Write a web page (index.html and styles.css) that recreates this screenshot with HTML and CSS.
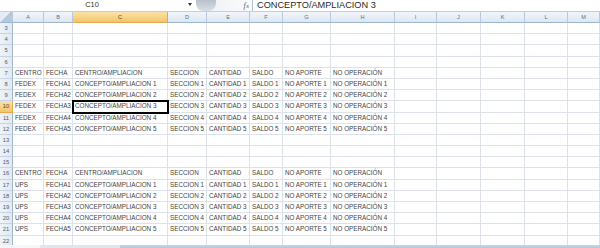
FILE: index.html
```html
<!DOCTYPE html>
<html lang="es">
<head>
    <meta charset="UTF-8">
    <title>Libro1 - Hoja1</title>
    <link rel="stylesheet" href="styles.css">
</head>
<body>
    <div class="window">
        <div class="formula-bar">
            <div class="name-box">C10</div>
            <div class="name-arrow"></div>
            <div class="fx-buttons">
                <span class="fx-knob"></span>
                <span class="fx">f<span class="fx-x">x</span></span>
            </div>
            <div class="formula-text">CONCEPTO/AMPLIACION 3</div>
        </div>

        <div class="sheet" id="sheet"></div>

        <div class="sheet-footer">
            <div class="tabs"></div>
            <div class="tab-gap"></div>
            <div class="hscroll"></div>
        </div>
    </div>

    <script>
        // columnas visibles de la hoja
        const columns = ['A', 'B', 'C', 'D', 'E', 'F', 'G', 'H', 'I', 'J', 'K', 'L', 'M'];
        const activeRow = 10;
        const activeCol = 2;

        const titles = ['CENTRO', 'FECHA', 'CENTRO/AMPLIACION', 'SECCION', 'CANTIDAD', 'SALDO', 'NO APORTE', 'NO OPERACIÓN'];

        function dataRow(centro, n) {
            return [centro, 'FECHA' + n, 'CONCEPTO/AMPLIACION ' + n, 'SECCION ' + n,
                'CANTIDAD ' + n, 'SALDO ' + n, 'NO APORTE ' + n, 'NO OPERACIÓN ' + n];
        }

        const data = { 7: titles, 16: titles };
        for (let n = 1; n <= 5; n++) {
            data[7 + n] = dataRow('FEDEX', n);
            data[16 + n] = dataRow('UPS', n);
        }

        const sheet = document.getElementById('sheet');

        function addCell(text, className) {
            const cell = document.createElement('div');
            cell.className = className;
            cell.textContent = text;
            sheet.appendChild(cell);
            return cell;
        }

        // cabecera de columnas
        addCell('', 'corner');
        columns.forEach((col, i) => {
            addCell(col, i === activeCol ? 'col-head selected' : 'col-head');
        });

        // filas 3 a 22
        for (let r = 3; r <= 22; r++) {
            addCell(r, r === activeRow ? 'row-head selected' : 'row-head');
            const values = data[r] || [];
            columns.forEach((col, i) => {
                const cls = (r === activeRow && i === activeCol) ? 'cell active' : 'cell';
                addCell(values[i] || '', cls);
            });
        }
    </script>
</body>
</html>
```

FILE: styles.css
```css
* {
    box-sizing: border-box;
}

body {
    margin: 0;
    background: #fff;
    font-family: 'Liberation Sans', Arial, sans-serif;
    color: #2b2b2b;
}

.window {
    width: 600px;
    height: 248px;
    display: flex;
    flex-direction: column;
    overflow: hidden;
}

/* barra de fórmulas */
.formula-bar {
    height: 12px;
    flex: none;
    display: flex;
    align-items: stretch;
    background: #fff;
    border-bottom: 1px solid #c3cfdd;
}

.name-box {
    width: 184px;
    text-align: center;
    font-size: 7.4px;
    line-height: 10px;
    color: #333;
}

.name-arrow {
    width: 12px;
    display: flex;
    align-items: center;
    justify-content: center;
}

.name-arrow::before {
    content: '';
    border-left: 2.5px solid transparent;
    border-right: 2.5px solid transparent;
    border-top: 3px solid #333;
    margin-bottom: 2px;
}

.fx-buttons {
    width: 57px;
    height: 11px;
    display: flex;
    align-items: center;
    justify-content: space-between;
    padding-right: 3px;
    border-radius: 0 0 0 6px;
    background: linear-gradient(to right, #eef1f5, #f4f6f8 60%, #fbfbfc);
    border-right: 1px solid #b7c3d1;
}

.fx-knob {
    width: 20px;
    height: 11px;
    border-radius: 0 0 8px 8px;
    background: linear-gradient(to bottom, #b8c1cc, #d9dee5);
}

.fx {
    font-family: 'Liberation Serif', serif;
    font-style: italic;
    font-size: 8px;
    line-height: 10px;
    color: #555;
}

.fx-x {
    font-size: 6px;
    margin-left: 0.5px;
}

.formula-text {
    flex: 1;
    padding-left: 4px;
    font-size: 9.2px;
    line-height: 10px;
    color: #2a2a2a;
}

/* hoja */
.sheet {
    flex: 1;
    min-height: 0;
    overflow: hidden;
    display: grid;
    grid-template-columns: 13px 31px 29px 95px 39px 43px 33px 48px 64px 42px 44px 44px 43px 32px;
    grid-template-rows: 11px;
    grid-auto-rows: 11.2px;
}

.corner,
.col-head,
.row-head {
    background: linear-gradient(to bottom, #f1f5fa, #dde6f1);
    border-right: 1px solid #b9c9db;
    border-bottom: 1px solid #9eb6ce;
    color: #5b6f88;
    font-size: 5.6px;
    line-height: 10px;
    text-align: center;
}

.corner {
    background: linear-gradient(135deg, #e4ebf4 50%, #b7c8dc 50%);
}

.row-head {
    background: linear-gradient(to right, #eef3f9, #e2e9f3);
    border-bottom: 1px solid #c6d4e4;
    border-right: 1px solid #9eb6ce;
    font-size: 5.8px;
    color: #4d5d72;
}

.col-head.selected,
.row-head.selected {
    background: linear-gradient(to bottom, #fbe2a9, #f3c56b);
    border-right-color: #e6a94c;
    border-bottom-color: #e6a94c;
    color: #4c4232;
}

.cell {
    border-right: 1px solid #dde2ea;
    border-bottom: 1px solid #dde2ea;
    padding-left: 2px;
    font-size: 6.3px;
    line-height: 10.4px;
    white-space: nowrap;
    color: #444;
}

.cell.active {
    outline: 2px solid #000;
    outline-offset: -1px;
    position: relative;
    z-index: 1;
}

/* pestañas y barra de desplazamiento */
.sheet-footer {
    height: 3px;
    flex: none;
    display: flex;
}

.tabs {
    width: 40px;
    background: #f4f6f9;
}

.tab-gap {
    width: 80px;
    background: #e1e6ed;
}

.hscroll {
    flex: 1;
    background: linear-gradient(to bottom, #c7d6e8, #b3c6de);
}
```
